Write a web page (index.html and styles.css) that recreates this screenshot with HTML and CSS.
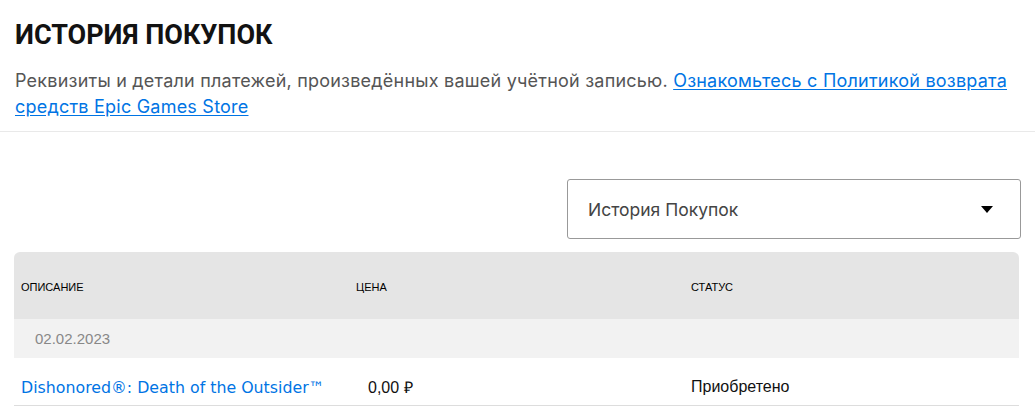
FILE: index.html
```html
<!DOCTYPE html>
<html lang="ru">
<head>
    <meta charset="UTF-8">
    <meta name="viewport" content="width=device-width, initial-scale=1.0">
    <title>История покупок</title>
    <link rel="stylesheet" href="styles.css">
</head>
<body>
    <div class="intro">
        <h1 class="title">История покупок</h1>
        <p class="lead">Реквизиты и детали платежей, произведённых вашей учётной записью. <a href="#">Ознакомьтесь с Политикой возврата средств Epic Games Store</a></p>
    </div>

    <div class="content">
        <div class="filter-row">
            <div class="select">
                <span>История Покупок</span>
                <svg class="caret" width="12" height="7" viewBox="0 0 12 7"><path d="M0 0h12L6 7z" fill="#000"/></svg>
            </div>
        </div>

        <div class="history">
            <div class="history-head">
                <div class="col">Описание</div>
                <div class="col">Цена</div>
                <div class="col">Статус</div>
            </div>
            <div class="history-date">02.02.2023</div>
            <div class="history-row">
                <div class="col"><a class="item-link" href="#">Dishonored®: Death of the Outsider™</a></div>
                <div class="col price">0,00 ₽</div>
                <div class="col">Приобретено</div>
            </div>
        </div>
    </div>
</body>
</html>
```

FILE: styles.css
```css
body {
    margin: 0;
    padding: 0;
    background-color: #ffffff;
    font-family: Inter, "Noto Sans", sans-serif;
    color: #121212;
}
a {
    color: #0074e4;
}
.intro {
    padding: 18px 15px 11px 15px;
    border-bottom: 1px solid #e9e9e9;
}
.title {
    margin: 0;
    font-family: Roboto, Inter, sans-serif;
    font-size: 27px;
    line-height: 34px;
    font-weight: 700;
    text-transform: uppercase;
}
.lead {
    margin: 16px 0 0 0;
    font-size: 18px;
    line-height: 26px;
    color: #555555;
    letter-spacing: 0.22px;
}
.lead a {
    text-underline-offset: 2px;
}
.content {
    padding: 47px 14px 0 14px;
}
.filter-row {
    display: flex;
    justify-content: flex-end;
}
.select {
    width: 405px;
    height: 58px;
    border: 1px solid #999999;
    border-radius: 3px;
    display: flex;
    align-items: center;
    justify-content: space-between;
    padding: 0 27px 0 20px;
    font-size: 17.5px;
    color: #444444;
}
.history {
    margin-top: 13px;
    margin-right: 2px;
    border-radius: 6px 6px 0 0;
    overflow: hidden;
    font-family: "Liberation Sans", Arial, sans-serif;
}
.history-head,
.history-row {
    display: grid;
    grid-template-columns: 1fr 1fr 1fr;
}
.history-head {
    background-color: #e5e5e5;
    height: 67px;
    align-items: center;
    font-size: 11px;
    text-transform: uppercase;
    color: #000000;
}
.history-head .col {
    padding: 3px 0 0 7px;
}
.history-date {
    background-color: #f2f2f2;
    height: 39px;
    line-height: 39px;
    padding-left: 21px;
    font-size: 15px;
    color: #888888;
}
.history-row {
    height: 47px;
    align-items: center;
    border-bottom: 1px solid #dddddd;
    font-size: 16px;
    color: #111111;
}
.history-row .col {
    padding: 11px 0 0 7px;
}
.item-link {
    font-family: "DejaVu Sans", Verdana, sans-serif;
    font-size: 15.8px;
    text-decoration: none;
}
.history-row .price {
    padding-left: 19px;
}
```
